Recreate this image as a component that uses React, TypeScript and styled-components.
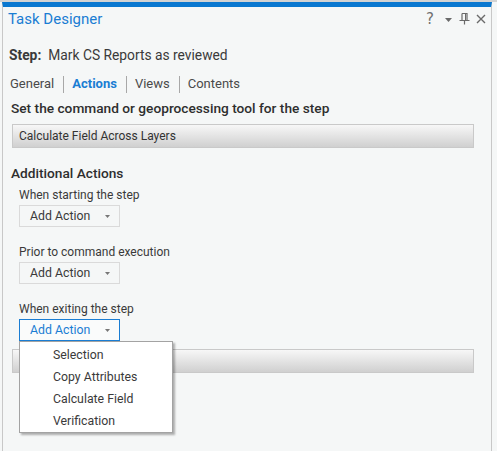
import React from "react";
import styled, { createGlobalStyle } from "styled-components";

const Global = createGlobalStyle`
  html, body { margin: 0; padding: 0; background: #f5f7f7; }
  body { font-family: Roboto, "Open Sans", sans-serif; color: #333; }
  * { box-sizing: border-box; }
`;

const Frame = styled.div`
  width: 497px;
  height: 451px;
  border-top: 2px solid #d3d3d3;
  display: flex;
  overflow: hidden;
`;

const Panel = styled.div`
  margin-left: 2px;
  width: 490px;
  height: 100%;
  background: #f5f7f7;
  border-top: 5px solid #0a78d0;
  border-left: 1px solid #c8c8c8;
  border-right: 1px solid #c8c8c8;
  display: flex;
  flex-direction: column;
`;

const Header = styled.div`
  display: flex;
  align-items: center;
  justify-content: space-between;
  padding: 1px 5px 0 5px;
  height: 22px;
`;

const Title = styled.div`
  color: #1a7dd3;
  font-size: 15px;
  line-height: 20px;
`;

const Tools = styled.div`
  display: flex;
  align-items: center;
  color: #6a6a6a;
`;

const Help = styled.span`
  font-size: 15px;
  line-height: 14px;
  font-family: "DejaVu Sans", sans-serif;
  color: #707070;
  margin-right: 11px;
`;

const Body = styled.div`
  padding: 0 0 0 6px;
  position: relative;
  flex: 1;
`;

const StepLine = styled.div`
  margin-top: 16px;
  font-size: 13.8px;
  line-height: 20px;
  color: #3a3a3a;
  display: flex;
  gap: 7px;
  b { font-weight: 700; color: #3a3a3a; }
`;

const Tabs = styled.div`
  margin-top: 9px;
  display: flex;
  align-items: center;
  font-size: 13px;
  line-height: 20px;
  padding-left: 1px;
`;

const Tab = styled.span<{ $active?: boolean }>`
  color: ${(p) => (p.$active ? "#1a7dd3" : "#4a4a4a")};
  font-weight: ${(p) => (p.$active ? 700 : 400)};
`;

const Sep = styled.span`
  width: 1px;
  height: 17px;
  background: #a8a8a8;
  margin: 0 8px 0 9px;
`;

const Heading = styled.div<{ $top: number }>`
  margin-top: ${(p) => p.$top}px;
  padding-left: 2px;
  font-size: 13.7px;
  line-height: 20px;
  color: #2e2e2e;
  font-weight: 500;
`;

const Field = styled.div<{ $top: number }>`
  margin-top: ${(p) => p.$top}px;
  margin-left: 3px;
  width: 462px;
  height: 24px;
  border: 1px solid #c9c9c9;
  background: linear-gradient(#f7f7f7, #d0d0d0);
  font-size: 12px;
  line-height: 22px;
  padding-left: 6px;
  color: #333;
`;

const Group = styled.div<{ $top: number }>`
  margin-top: ${(p) => p.$top}px;
  padding-left: 10px;
  position: relative;
`;

const Label = styled.div`
  font-size: 12px;
  line-height: 18px;
  color: #3a3a3a;
`;

const ActionButton = styled.div<{ $open?: boolean }>`
  margin-top: 1px;
  width: 101px;
  height: 22px;
  border: 1px solid ${(p) => (p.$open ? "#1a7dd3" : "#dadada")};
  background: ${(p) => (p.$open ? "#fafbfb" : "#f5f7f7")};
  display: flex;
  align-items: center;
  padding-left: 10px;
  font-size: 12.3px;
  color: ${(p) => (p.$open ? "#1a7dd3" : "#3a3a3a")};
  span { flex: 1; }
  svg { margin-right: 9px; }
`;

const Menu = styled.div`
  position: absolute;
  left: 10px;
  top: 41px;
  width: 154px;
  height: 92px;
  background: #fff;
  border: 1px solid #a3a3a3;
  box-shadow: 2px 2px 2px rgba(0, 0, 0, 0.3);
  padding-top: 2px;
  z-index: 2;
`;

const MenuItem = styled.div`
  height: 22px;
  line-height: 22px;
  padding-left: 33px;
  font-size: 12.3px;
  color: #3a3a3a;
`;

const Caret = () => (
  <svg width="5" height="3" viewBox="0 0 5 3">
    <path d="M0 0H5L2.5 3Z" fill="#777" />
  </svg>
);

export default function App() {
  return (
    <>
      <Global />
      <Frame>
        <Panel>
          <Header>
            <Title>Task Designer</Title>
            <Tools>
              <Help>?</Help>
              <svg width="7" height="4" viewBox="0 0 7 4" style={{ marginTop: 3, marginRight: 7 }}>
                <path d="M0 0H7L3.5 4Z" fill="#6a6a6a" />
              </svg>
              <svg width="11" height="13" viewBox="0 0 11 13" style={{ marginRight: 6 }}>
                <path d="M3 1.5H8V8.5M3 1.5V8.5M0.5 8.5H10.5M5.5 8.5V12.5" stroke="#6a6a6a" strokeWidth="1.2" fill="none" />
                <path d="M6.5 2V8" stroke="#6a6a6a" strokeWidth="1" />
              </svg>
              <svg width="10" height="10" viewBox="0 0 10 10">
                <path d="M1 1L9 9M9 1L1 9" stroke="#6a6a6a" strokeWidth="1.4" />
              </svg>
            </Tools>
          </Header>
          <Body>
            <StepLine>
              <b>Step:</b>
              <span>Mark CS Reports as reviewed</span>
            </StepLine>
            <Tabs>
              <Tab>General</Tab>
              <Sep />
              <Tab $active>Actions</Tab>
              <Sep />
              <Tab>Views</Tab>
              <Sep />
              <Tab>Contents</Tab>
            </Tabs>
            <Heading $top={4}>Set the command or geoprocessing tool for the step</Heading>
            <Field $top={6}>Calculate Field Across Layers</Field>
            <Heading $top={15}>Additional Actions</Heading>
            <Group $top={3}>
              <Label>When starting the step</Label>
              <ActionButton>
                <span>Add Action</span>
                <Caret />
              </ActionButton>
            </Group>
            <Group $top={16}>
              <Label>Prior to command execution</Label>
              <ActionButton>
                <span>Add Action</span>
                <Caret />
              </ActionButton>
            </Group>
            <Group $top={16}>
              <Label>When exiting the step</Label>
              <ActionButton $open>
                <span>Add Action</span>
                <Caret />
              </ActionButton>
              <Menu>
                <MenuItem>Selection</MenuItem>
                <MenuItem>Copy Attributes</MenuItem>
                <MenuItem>Calculate Field</MenuItem>
                <MenuItem>Verification</MenuItem>
              </Menu>
            </Group>
            <Field $top={8}></Field>
          </Body>
        </Panel>
      </Frame>
    </>
  );
}
